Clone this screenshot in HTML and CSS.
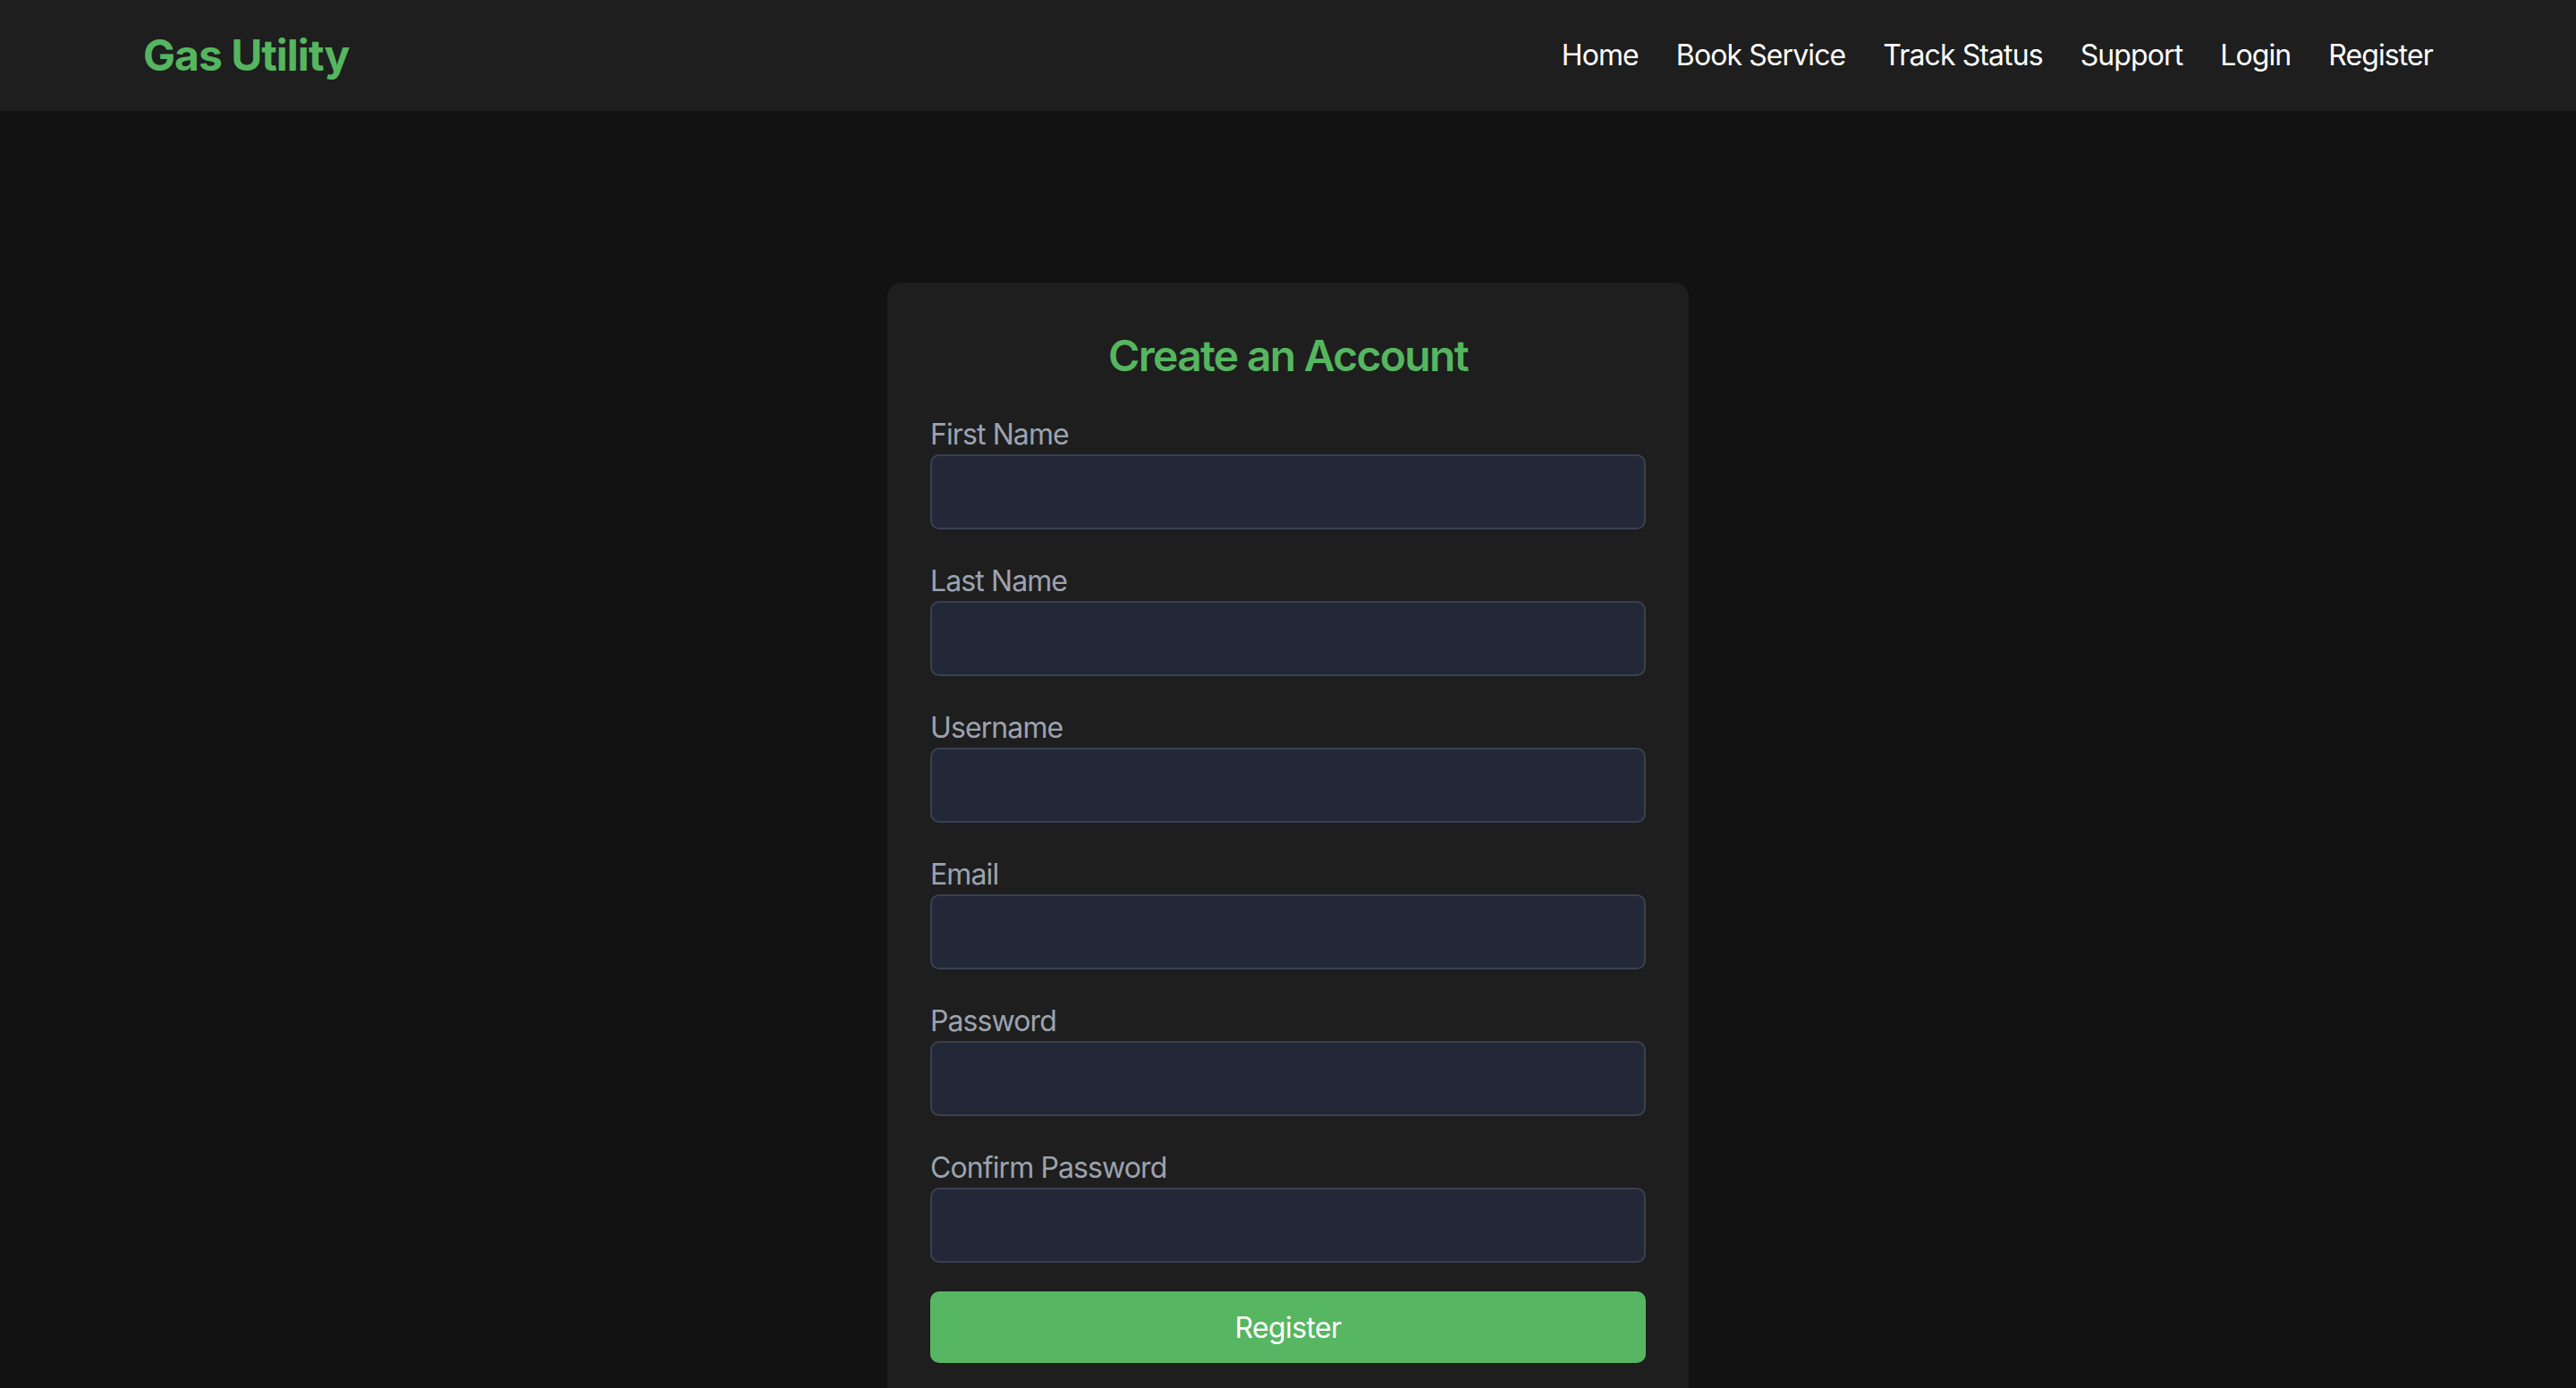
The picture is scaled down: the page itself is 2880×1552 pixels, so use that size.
FILE: index.html
```html
<!DOCTYPE html>
<html lang="en">
<head>
<meta charset="utf-8">
<title>Register - Gas Utility</title>
<link rel="stylesheet" href="styles.css">
</head>
<body>
<header class="site-header">
  <div class="header-inner">
    <a class="logo" href="#">Gas Utility</a>
    <nav class="nav">
      <a href="#">Home</a>
      <a href="#">Book Service</a>
      <a href="#">Track Status</a>
      <a href="#">Support</a>
      <a href="#">Login</a>
      <a href="#">Register</a>
    </nav>
  </div>
</header>
<main class="main">
  <div class="card">
    <h2 class="card-title">Create an Account</h2>
    <form class="form">
      <div class="field">
        <label class="label">First Name</label>
        <input class="input" type="text">
      </div>
      <div class="field">
        <label class="label">Last Name</label>
        <input class="input" type="text">
      </div>
      <div class="field">
        <label class="label">Username</label>
        <input class="input" type="text">
      </div>
      <div class="field">
        <label class="label">Email</label>
        <input class="input" type="email">
      </div>
      <div class="field">
        <label class="label">Password</label>
        <input class="input" type="password">
      </div>
      <div class="field">
        <label class="label">Confirm Password</label>
        <input class="input" type="password">
      </div>
      <button class="btn" type="button">Register</button>
    </form>
  </div>
</main>
</body>
</html>
```

FILE: styles.css
```css
* { box-sizing: border-box; }

html, body {
  margin: 0;
  padding: 0;
  background: #121212;
  font-family: Inter, "Noto Sans", "Liberation Sans", sans-serif;
  color: #ffffff;
}

.site-header {
  background: #1e1e1e;
  height: 124px;
}

.header-inner {
  max-width: 2560px;
  margin: 0 auto;
  height: 100%;
  display: flex;
  align-items: center;
  justify-content: space-between;
}

.logo {
  color: #55b65f;
  font-size: 48px;
  font-weight: 700;
  line-height: 64px;
  text-decoration: none;
  letter-spacing: -1px;
}

.nav {
  display: flex;
  gap: 42px;
}

.nav a {
  color: #ffffff;
  font-size: 32px;
  line-height: 48px;
  text-decoration: none;
  letter-spacing: -0.9px;
}

.main {
  display: flex;
  justify-content: center;
  padding-top: 192px;
}

.card {
  width: 896px;
  background: #1e1e1e;
  border-radius: 16px;
  padding: 48px;
}

.card-title {
  margin: 0 0 30px;
  padding-top: 2px;
  text-align: center;
  color: #55b65f;
  font-size: 48px;
  line-height: 64px;
  font-weight: 600;
  letter-spacing: -1.7px;
}

.form {
  display: flex;
  flex-direction: column;
}

.field {
  display: flex;
  flex-direction: column;
  margin-bottom: 32px;
}

.label {
  color: #9ca3af;
  font-size: 32px;
  line-height: 48px;
  padding-top: 2px;
  margin-bottom: -2px;
  letter-spacing: -0.9px;
}

.input {
  height: 84px;
  background: #222837;
  border: 2px solid #394150;
  border-radius: 10px;
  color: #ffffff;
  font-size: 32px;
  padding: 0 24px;
  font-family: inherit;
}

.btn {
  height: 80px;
  background: #57b662;
  color: #ffffff;
  border: none;
  border-radius: 10px;
  font-size: 32px;
  font-family: inherit;
  letter-spacing: -0.6px;
}
```
